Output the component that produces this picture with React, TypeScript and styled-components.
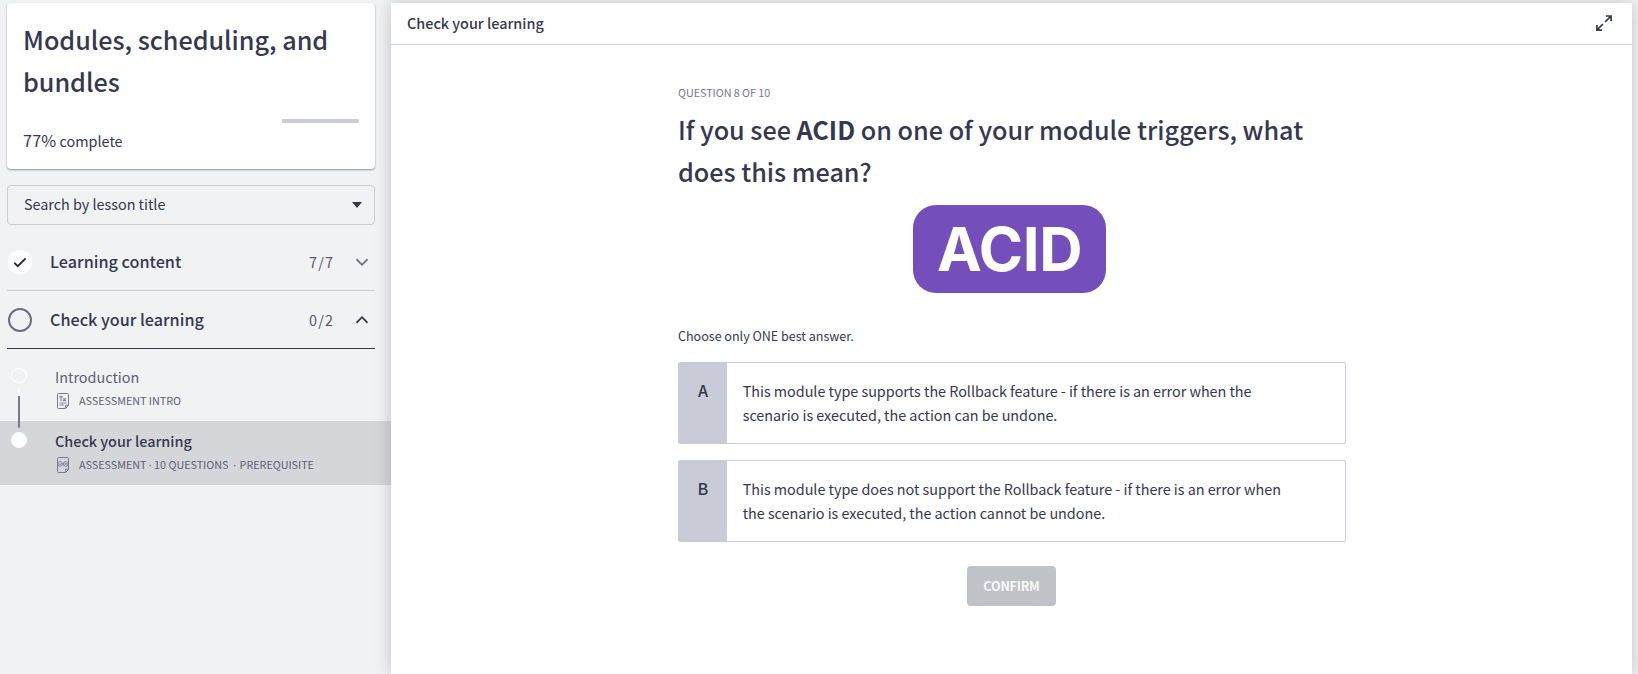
import React from 'react';
import styled, { createGlobalStyle } from 'styled-components';

const ink = '#35384e';
const muted = '#6b6d84';
const line = '#c9cbd6';

const GlobalStyle = createGlobalStyle`
  * { box-sizing: border-box; }
  body {
    margin: 0;
    background: #f1f2f4;
    color: ${ink};
    font-family: "Noto Sans CJK SC", "Noto Sans", sans-serif;
    font-size: 14.4px;
  }
  h1, h2, p { margin: 0; font-weight: 500; }
  svg { display: block; flex: none; }
`;

const Page = styled.div`
  display: flex;
  height: 674px;
  overflow: hidden;
`;

/* ---------- sidebar ---------- */

const Sidebar = styled.aside`
  width: 391px;
  flex: none;
  padding-top: 3px;
`;

const CourseCard = styled.section`
  width: 368px;
  height: 166px;
  margin-left: 7px;
  padding: 15px 16px 0 16px;
  border-radius: 4px;
  background: #fff;
  box-shadow: 0 1px 2px rgba(0, 0, 0, 0.4);
`;

const CourseTitle = styled.h1`
  font-size: 25.2px;
  line-height: 42px;
  letter-spacing: -0.02px;
`;

const Progress = styled.div`
  display: flex;
  justify-content: flex-end;
  height: 4px;
  margin-top: 17px;
`;

const Remaining = styled.div`
  width: 77px;
  border-radius: 0 2px 2px 0;
  background: ${line};
`;

const ProgressLabel = styled.p`
  margin-top: 5px;
  line-height: 24px;
  font-weight: 400;
`;

const Percent = styled.span`
  font-size: 16.2px;
  letter-spacing: 0.15px;
`;

const SearchBox = styled.div`
  display: flex;
  align-items: center;
  justify-content: space-between;
  width: 368px;
  height: 40px;
  margin: 16px 0 0 7px;
  padding: 0 12px 0 16px;
  border: 1px solid ${line};
  border-radius: 4px;
  letter-spacing: -0.02px;
`;

const SearchText = styled.span`
  padding-bottom: 3px;
`;

const SectionRow = styled.div<{ $open?: boolean }>`
  display: flex;
  align-items: center;
  width: 368px;
  height: 58px;
  margin-left: 7px;
  padding: 0 7px 0 1px;
  border-bottom: 1px solid ${(p) => (p.$open ? ink : line)};
`;

const Sections = styled.div`
  padding-top: 8px;
`;

const StatusDot = styled.div<{ $done?: boolean }>`
  display: flex;
  align-items: center;
  justify-content: center;
  width: 24px;
  height: 24px;
  border-radius: 50%;
  border: ${(p) => (p.$done ? '0' : `2px solid ${muted}`)};
  background: ${(p) => (p.$done ? '#fff' : 'transparent')};
`;

const SectionName = styled.h2`
  flex: 1;
  margin-left: 18px;
  padding-bottom: 2px;
  font-size: 16.2px;
  line-height: 24px;
`;

const Count = styled.span`
  margin-right: 22px;
  letter-spacing: 1.1px;
  color: #55576d;
`;

const Lessons = styled.div`
  padding-top: 8px;
`;

const Lesson = styled.div<{ $active?: boolean }>`
  display: flex;
  height: 64px;
  padding: 11px 0 0 11px;
  background: ${(p) => (p.$active ? '#d5d6da' : 'transparent')};
`;

const Track = styled.div`
  display: flex;
  flex-direction: column;
  align-items: center;
  width: 16px;
  height: 60px;
  position: relative;
`;

const Bullet = styled.div<{ $filled?: boolean }>`
  width: 16px;
  height: 16px;
  border: 1px solid #fff;
  border-radius: 50%;
  background: ${(p) => (p.$filled ? '#fff' : 'transparent')};
`;

const Connector = styled.div`
  width: 2px;
  height: 40px;
  margin-top: 5px;
  flex: none;
  border-radius: 1px;
  background: linear-gradient(#fbfbfc 0 8px, #77798d 8px);
`;

const LessonBody = styled.div`
  margin-left: 28px;
`;

const LessonName = styled.div<{ $active?: boolean }>`
  padding-bottom: 2px;
  line-height: 18px;
  font-weight: ${(p) => (p.$active ? 500 : 400)};
  color: ${(p) => (p.$active ? ink : '#5d5f75')};
`;

const Meta = styled.div`
  display: flex;
  align-items: flex-start;
  margin-top: 5px;
  padding-left: 2px;
  height: 16px;
  font-size: 10.8px;
  line-height: 14px;
  color: #5d5f75;
`;

const MetaText = styled.span`
  margin-left: 10px;
  white-space: pre;
  letter-spacing: -0.03px;
`;

const Dot = styled.span<{ $spaced?: boolean }>`
  margin-right: ${(p) => (p.$spaced ? '1.2px' : '0')};
  font-family: "Noto Sans", sans-serif;
  line-height: 1;
`;

/* ---------- content panel ---------- */

const Main = styled.main`
  width: 1241px;
  margin-top: 3px;
  flex: none;
  background: #fff;
  box-shadow: 0 0 16px rgba(0, 0, 0, 0.2);
`;

const TopBar = styled.header`
  display: flex;
  align-items: center;
  justify-content: space-between;
  height: 42px;
  padding: 0 20px 2px 16px;
  border-bottom: 1px solid ${line};
`;

const TopTitle = styled.h2`
  font-size: 14.4px;
  line-height: 24px;
`;

const Question = styled.section`
  width: 668px;
  margin-left: 287px;
  padding-top: 38px;
`;

const Step = styled.p`
  font-size: 10.8px;
  line-height: 18px;
  font-weight: 400;
  letter-spacing: -0.05px;
  color: #76788a;
`;

const Prompt = styled.h1`
  margin-top: 7px;
  font-size: 25.2px;
  line-height: 42px;
  letter-spacing: -0.02px;
`;

const Badge = styled.div`
  display: flex;
  align-items: center;
  justify-content: center;
  width: 193px;
  height: 88px;
  margin: 13px 0 0 235px;
  border-radius: 23px;
  background: #744fbc;
  color: #fff;
  font-family: Inter, sans-serif;
  font-size: 60px;
  line-height: 88px;
  font-weight: 700;
  letter-spacing: -0.4px;
`;

const Hint = styled.p`
  margin-top: 33px;
  font-size: 12.6px;
  line-height: 20px;
  font-weight: 400;
  letter-spacing: -0.04px;
`;

const Answers = styled.div`
  display: flex;
  flex-direction: column;
  gap: 16px;
  margin-top: 16px;
`;

const Answer = styled.div`
  display: flex;
  height: 82px;
  border: 1px solid ${line};
  border-radius: 2px;
  line-height: 24px;
`;

const Letter = styled.div`
  width: 48px;
  padding-top: 15px;
  background: #c9ccd6;
  text-align: center;
  font-size: 16.2px;
  font-weight: 500;
`;

const AnswerText = styled.p`
  width: 560px;
  padding: 16px 0 0 15.7px;
  font-weight: 400;
  letter-spacing: -0.032px;
  white-space: nowrap;
`;

const Confirm = styled.button`
  display: block;
  width: 89px;
  height: 40px;
  margin: 24px 0 0 289px;
  padding: 0 0 1px;
  border: 0;
  border-radius: 4px;
  background: #c1c2c8;
  color: #f7f7f9;
  font-family: inherit;
  font-size: 12.6px;
  font-weight: 700;
  letter-spacing: -0.2px;
`;

const Caret = () => (
  <svg width="10" height="6" viewBox="0 0 10 6"><path d="M0 0H10L5 6Z" fill={ink} /></svg>
);

const Check = () => (
  <svg width="14" height="12" viewBox="0 0 14 12" fill="none">
    <path d="M1.3 6.8L4.8 10.2L12.6 2.4" stroke="#22232f" strokeWidth="1.8" />
  </svg>
);

const Chevron = ({ up }: { up?: boolean }) => (
  <svg width="12" height="8" viewBox="0 0 12 8" fill="none">
    <path d={up ? 'M0.5 6.8L6 1.2L11.5 6.8' : 'M0.5 1.2L6 6.8L11.5 1.2'} stroke={up ? ink : muted} strokeWidth="1.7" />
  </svg>
);

const DocIcon = ({ quiz }: { quiz?: boolean }) => (
  <svg width="12" height="16" viewBox="0 0 12 16" fill="none" stroke="#77798d">
    <path d="M8.6 15.5H1.5Q.5 15.5 .5 14.5V1.5Q.5 .5 1.5 .5H10.5Q11.5 .5 11.5 1.5V12.3L8.6 15.5V12.3H11.5" />
    {quiz ? (
      <>
        <circle cx="3.2" cy="7" r="2.3" strokeWidth=".9" />
        <circle cx="8.7" cy="7" r="2.3" strokeWidth=".9" />
        <path d="M2.2 7l.9.9 1.7-2M7.8 6.1l1.8 1.8M9.6 6.1L7.8 7.9" strokeWidth=".8" />
      </>
    ) : (
      <>
        <path d="M2 3.7H6M4 3.7V8M6.2 5.3L8.8 8M8.8 5.3L6.2 8" strokeWidth="1.1" />
        <path d="M2.5 10H9.5M2.5 12H7" strokeWidth=".9" />
      </>
    )}
  </svg>
);

const Expand = () => (
  <svg width="16" height="16" viewBox="0 0 16 16" fill="none" stroke={ink} strokeWidth="1.7">
    <path d="M9.2 6.8L15 1M9.9 1H15.1V6.1M6.8 9.2L1 15M.9 9.9V15.1H6.1" />
  </svg>
);

const answers = [
  ['A', 'This module type supports the Rollback feature - if there is an error when the', 'scenario is executed, the action can be undone.'],
  ['B', 'This module type does not support the Rollback feature - if there is an error when', 'the scenario is executed, the action cannot be undone.'],
];

export default function App() {
  return (
    <Page>
      <GlobalStyle />
      <Sidebar>
        <CourseCard>
          <CourseTitle>Modules, scheduling, and bundles</CourseTitle>
          <Progress><Remaining /></Progress>
          <ProgressLabel><Percent>77%</Percent> complete</ProgressLabel>
        </CourseCard>
        <SearchBox><SearchText>Search by lesson title</SearchText><Caret /></SearchBox>
        <Sections>
          <SectionRow>
            <StatusDot $done><Check /></StatusDot>
            <SectionName>Learning content</SectionName>
            <Count>7/7</Count>
            <Chevron />
          </SectionRow>
          <SectionRow $open>
            <StatusDot />
            <SectionName>Check your learning</SectionName>
            <Count>0/2</Count>
            <Chevron up />
          </SectionRow>
        </Sections>
        <Lessons>
          <Lesson>
            <Track><Bullet /><Connector /></Track>
            <LessonBody>
              <LessonName>Introduction</LessonName>
              <Meta><DocIcon /><MetaText>ASSESSMENT INTRO</MetaText></Meta>
            </LessonBody>
          </Lesson>
          <Lesson $active>
            <Track><Bullet $filled /></Track>
            <LessonBody>
              <LessonName $active>Check your learning</LessonName>
              <Meta>
                <DocIcon quiz />
                <MetaText>ASSESSMENT <Dot>·</Dot> 10 QUESTIONS  <Dot $spaced>·</Dot> PREREQUISITE</MetaText>
              </Meta>
            </LessonBody>
          </Lesson>
        </Lessons>
      </Sidebar>
      <Main>
        <TopBar>
          <TopTitle>Check your learning</TopTitle>
          <Expand />
        </TopBar>
        <Question>
          <Step>QUESTION 8 OF 10</Step>
          <Prompt>If you see <b>ACID</b> on one of your module triggers, what does this mean?</Prompt>
          <Badge>ACID</Badge>
          <Hint>Choose only ONE best answer.</Hint>
          <Answers>
            {answers.map(([letter, first, second]) => (
              <Answer key={letter}>
                <Letter>{letter}</Letter>
                <AnswerText>{first}<br />{second}</AnswerText>
              </Answer>
            ))}
          </Answers>
          <Confirm>CONFIRM</Confirm>
        </Question>
      </Main>
    </Page>
  );
}
